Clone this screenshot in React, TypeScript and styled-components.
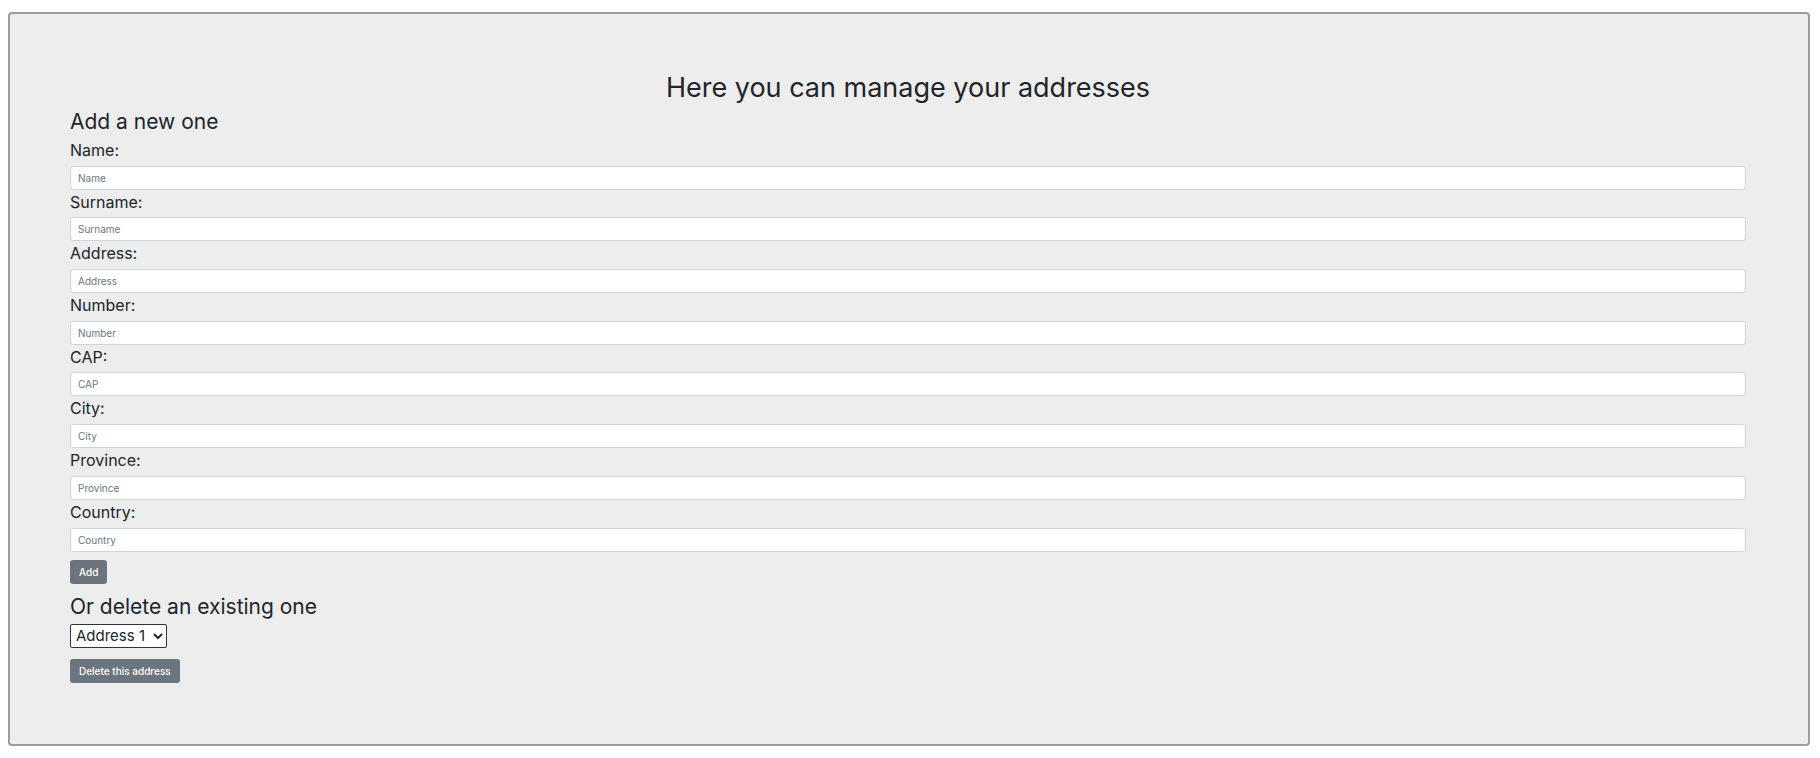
import styled, { createGlobalStyle } from 'styled-components';

const GlobalStyle = createGlobalStyle`
    body {
        margin: 0;
        background: #ffffff;
        font-family: Inter, "Noto Sans", "Liberation Sans", sans-serif;
        color: #212529;
    }
`;

const fields = ['Name', 'Surname', 'Address', 'Number', 'CAP', 'City', 'Province', 'Country'];

const App = () => {
    return (
        <Page>
            <GlobalStyle />
            <Panel>
                <Title>Here you can manage your addresses</Title>
                <Section>
                    <SubTitle>Add a new one</SubTitle>
                    {fields.map((field) => (
                        <Field key={field}>
                            <Label htmlFor={field}>{field}:</Label>
                            <Input id={field} type="text" placeholder={field} />
                        </Field>
                    ))}
                    <Button $top={8}>Add</Button>
                    <SubTitle $top={10}>Or delete an existing one</SubTitle>
                    <Select defaultValue="1">
                        <option value="1">Address 1</option>
                        <option value="2">Address 2</option>
                    </Select>
                    <Button $top={11}>Delete this address</Button>
                </Section>
            </Panel>
        </Page>
    );
};

export default App;

const Page = styled.div`
    padding: 12px 10px 12px 8px;
    box-sizing: border-box;
`;

const Panel = styled.div`
    background: #ededed;
    border: 2px solid #9c9c9c;
    border-radius: 4px;
    padding: 57px 62px 61px 60px;
`;

const Title = styled.h3`
    margin: 0 0 4px;
    font-size: 27px;
    line-height: 34px;
    font-weight: 400;
    text-align: center;
`;

const Section = styled.div`
    display: flex;
    flex-direction: column;
    align-items: flex-start;
`;

const SubTitle = styled.h5<{ $top?: number }>`
    margin: ${(p) => p.$top ?? 0}px 0 0;
    font-size: 21px;
    line-height: 25px;
    font-weight: 400;
`;

const Field = styled.div`
    display: flex;
    flex-direction: column;
    width: 100%;
    margin-top: 4px;

    & + & {
        margin-top: 0;
    }
`;

const Label = styled.label`
    font-size: 16px;
    line-height: 24px;
    margin-bottom: 3.7px;
`;

const Input = styled.input`
    height: 24px;
    box-sizing: border-box;
    width: 100%;
    border: 1px solid #ced4da;
    border-radius: 3px;
    background: #ffffff;
    padding: 0 7px;
    font-family: inherit;
    font-size: 10px;
    color: #212529;

    &::placeholder {
        color: #6c757d;
    }
`;

const Button = styled.button<{ $top: number }>`
    margin-top: ${(p) => p.$top}px;
    height: 24px;
    padding: 0 9px;
    border: none;
    border-radius: 3px;
    background: #6c757d;
    color: #ffffff;
    font-family: inherit;
    font-size: 10px;
    font-weight: 500;
`;

const Select = styled.select`
    margin-top: 5px;
    height: 24px;
    border: 1px solid #333333;
    border-radius: 2px;
    background: #ffffff;
    font-family: inherit;
    font-size: 15px;
    color: #212529;
    padding: 0 1px;
`;
